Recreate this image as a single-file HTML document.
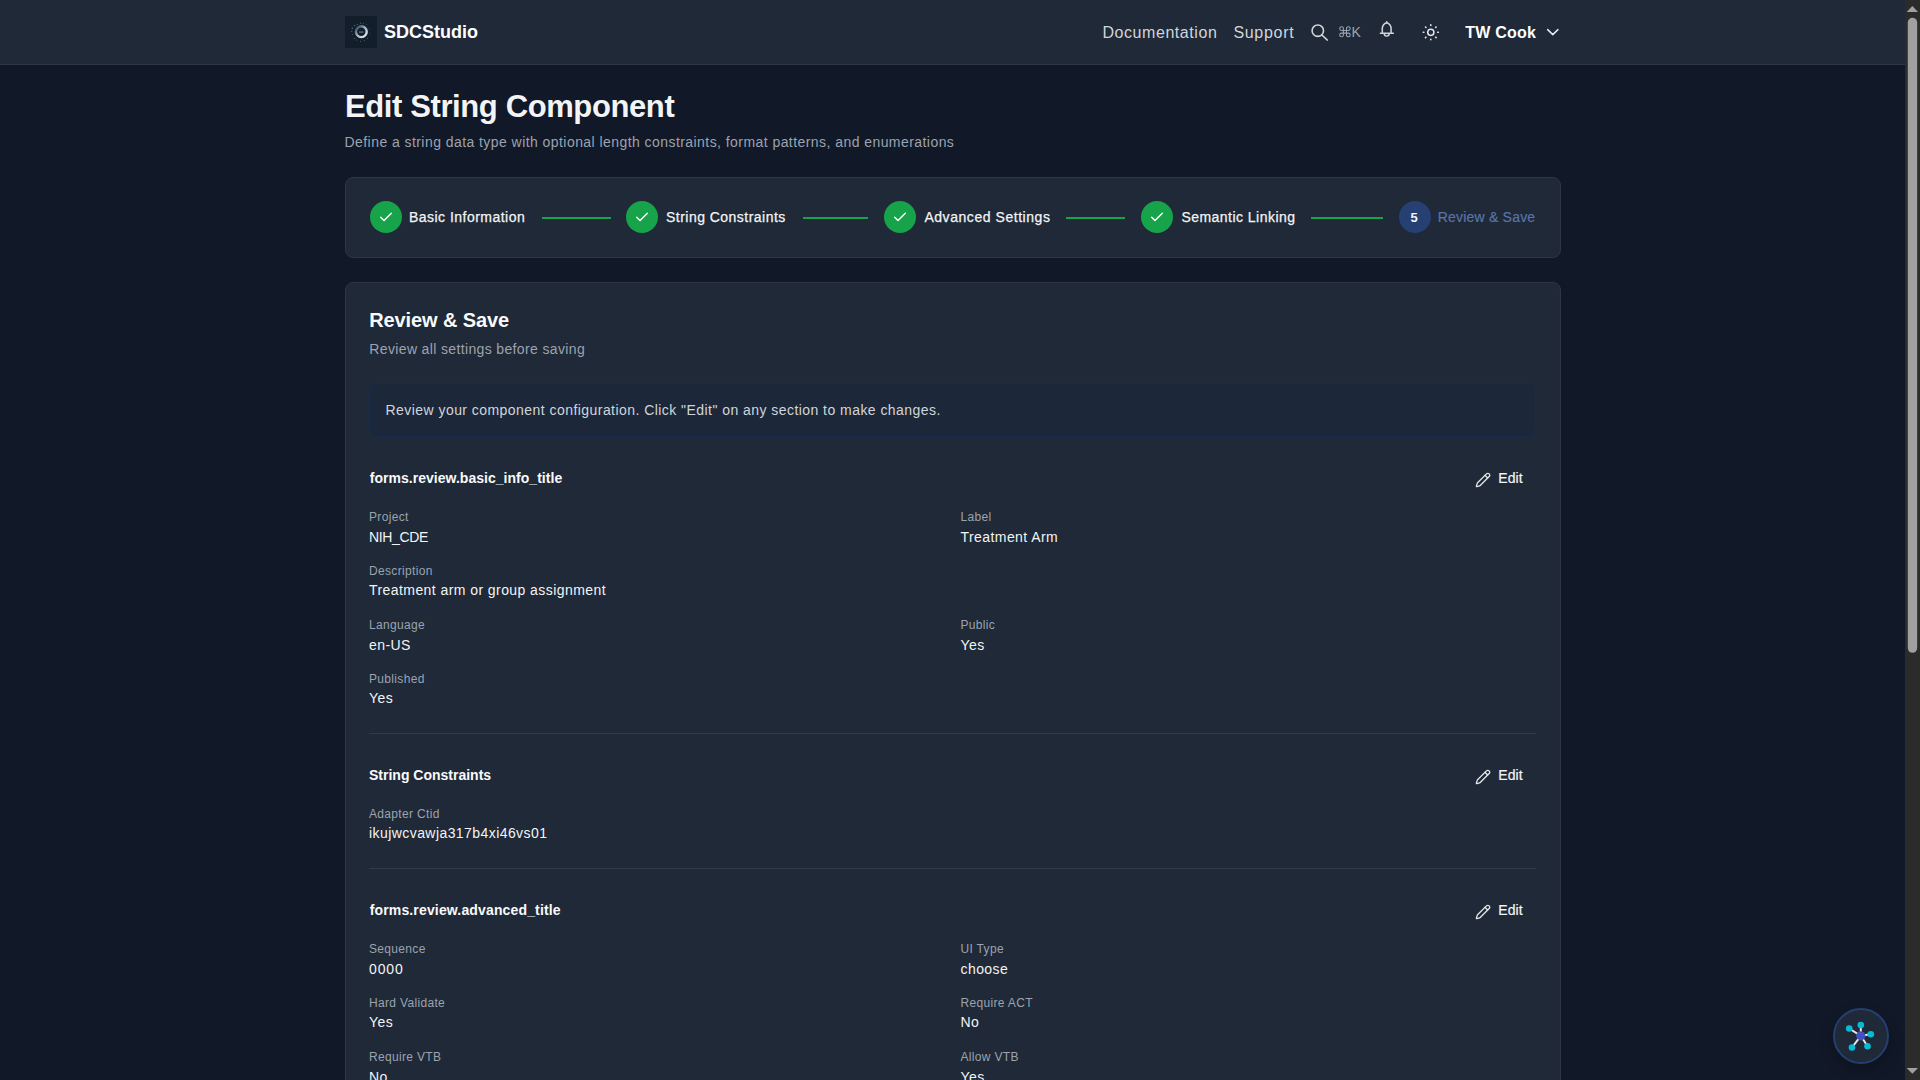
<!DOCTYPE html>
<html>
<head>
<meta charset="utf-8">
<style>
html,body{margin:0;padding:0;width:1920px;height:1080px;overflow:hidden;background:#111827;}
body{font-family:"Liberation Sans",sans-serif;position:relative;}
#page{position:absolute;left:0;top:0;width:1905px;height:1080px;overflow:hidden;background:#111827;}
.t{position:absolute;white-space:nowrap;line-height:1;}
.hdr{position:absolute;left:0;top:0;width:1905px;height:64px;background:#1f2937;border-bottom:1px solid #2d3748;}
.card{position:absolute;background:#1f2937;border:1px solid #2d3546;border-radius:8px;box-sizing:border-box;}
.circ{position:absolute;width:32px;height:32px;border-radius:50%;background:#16a34a;top:201.2px;}
.circ svg{position:absolute;left:0;top:0;}
.line{position:absolute;height:2px;top:216.5px;background:#16a34a;}
.step{font-size:14px;color:#f3f4f6;top:210.35px;letter-spacing:0.47px;-webkit-text-stroke:0.25px #f3f4f6;}
.lbl{font-size:12px;color:#9ca3af;letter-spacing:0.33px;}
.val{font-size:14px;color:#f3f4f6;letter-spacing:0.43px;}
.sec{font-size:14px;font-weight:700;color:#f9fafb;}
.edit{font-size:14px;color:#f3f4f6;letter-spacing:0.1px;-webkit-text-stroke:0.2px #f3f4f6;}
.divider{position:absolute;left:369px;width:1167px;height:1px;background:#323a48;}
#sb{position:absolute;left:1905px;top:0;width:15px;height:1080px;background:#2b2b2b;}
</style>
</head>
<body>
<div id="page">
  <!-- HEADER -->
  <div class="hdr"></div>
  <div style="position:absolute;left:345px;top:16px;width:32px;height:32px;background:#131e2b;">
    <svg width="32" height="32" viewBox="0 0 32 32">
      <defs><linearGradient id="lg" x1="0" y1="0" x2="1" y2="1"><stop offset="0" stop-color="#1f3a58"/><stop offset="0.45" stop-color="#9fb0c4"/><stop offset="1" stop-color="#eef1f5"/></linearGradient></defs>
      <circle cx="16.3" cy="15.7" r="5.4" fill="none" stroke="url(#lg)" stroke-width="2.4"/>
      <rect x="14" y="15.6" width="4.5" height="0.9" fill="#8d99a8"/>
      <g fill="#5f6c7d">
        <circle cx="7.3" cy="12.3" r="0.75"/><circle cx="9.6" cy="9.6" r="0.7"/><circle cx="12.3" cy="8.5" r="0.6"/>
        <circle cx="15.8" cy="7.2" r="0.6"/><circle cx="18.6" cy="7.3" r="0.5"/><circle cx="6.8" cy="15.3" r="0.6"/>
        <circle cx="7.3" cy="18.5" r="0.5"/><circle cx="9.3" cy="22.3" r="0.6"/><circle cx="11.8" cy="24" r="0.5"/>
        <circle cx="15.5" cy="25.2" r="0.5"/><circle cx="19.3" cy="24.8" r="0.5"/><circle cx="22.3" cy="22.3" r="0.5"/>
        <circle cx="25.2" cy="17.3" r="0.45"/><circle cx="24.6" cy="13.2" r="0.45"/><circle cx="21.8" cy="8.7" r="0.45"/>
      </g>
    </svg>
  </div>
  <div class="t" style="left:384px;top:23px;font-size:18px;font-weight:700;color:#ffffff;">SDCStudio</div>
  <div class="t" style="left:1102.4px;top:24.5px;font-size:16px;color:#d1d5db;letter-spacing:0.57px;">Documentation</div>
  <div class="t" style="left:1233.4px;top:24.5px;font-size:16px;color:#d1d5db;letter-spacing:0.7px;">Support</div>
  <!-- search icon -->
  <svg style="position:absolute;left:1300px;top:14px;" width="40" height="34" viewBox="1300 14 40 34">
    <circle cx="1317.8" cy="30.7" r="5.7" fill="none" stroke="#d1d5db" stroke-width="1.6"/>
    <line x1="1321.9" y1="35" x2="1327.2" y2="40" stroke="#d1d5db" stroke-width="1.7" stroke-linecap="round"/>
  </svg>
  <!-- cmd K -->
  <svg style="position:absolute;left:1336px;top:22px;" width="16" height="18" viewBox="1336 22 16 18"><path d="M1343.4 28.549999999999997 V34.95 M1346.5 28.549999999999997 V34.95 M1341.5500000000002 30.4 H1348.35 M1341.5500000000002 33.1 H1348.35 M1343.4 28.549999999999997 A1.85 1.85 0 1 0 1341.5500000000002 30.4 M1346.5 28.549999999999997 A1.85 1.85 0 1 1 1348.35 30.4 M1343.4 34.95 A1.85 1.85 0 1 1 1341.5500000000002 33.1 M1346.5 34.95 A1.85 1.85 0 1 0 1348.35 33.1" fill="none" stroke="#9ca3af" stroke-width="1.05"/></svg>
  <div class="t" style="left:1351.6px;top:25px;font-size:14px;color:#9ca3af;">K</div>
  <!-- bell -->
  <svg style="position:absolute;left:1376px;top:18px;" width="22" height="22" viewBox="1376 18 22 22">
    <path d="M1380.4 33.25 H1393.3 M1382.3 33.25 V29 C1382.3 25.9 1384.1 23.5 1386.7 22.7 C1389.3 23.5 1391.1 25.9 1391.1 29 V33.25" fill="none" stroke="#d1d5db" stroke-width="1.5" stroke-linejoin="round" stroke-linecap="round"/>
    <path d="M1386.7 21.7 V22.8" fill="none" stroke="#d1d5db" stroke-width="1.6" stroke-linecap="round"/>
    <path d="M1384.2 33.6 A2.5 2.5 0 0 0 1389.2 33.6" fill="none" stroke="#d1d5db" stroke-width="1.45"/>
  </svg>
  <!-- sun -->
  <svg style="position:absolute;left:1420px;top:21px;" width="22" height="22" viewBox="1420 21 22 22">
    <circle cx="1430.8" cy="32.3" r="3.1" fill="none" stroke="#e5e7eb" stroke-width="1.5"/>
    <g stroke="#e5e7eb" stroke-width="1.6" stroke-linecap="round">
      <line x1="1430.8" y1="24.8" x2="1430.8" y2="25.4"/>
      <line x1="1430.8" y1="39.2" x2="1430.8" y2="39.8"/>
      <line x1="1423.3" y1="32.3" x2="1423.9" y2="32.3"/>
      <line x1="1437.7" y1="32.3" x2="1438.3" y2="32.3"/>
      <line x1="1425.5" y1="27" x2="1425.9" y2="27.4"/>
      <line x1="1435.7" y1="37.2" x2="1436.1" y2="37.6"/>
      <line x1="1436.1" y1="27" x2="1435.7" y2="27.4"/>
      <line x1="1425.9" y1="37.2" x2="1425.5" y2="37.6"/>
    </g>
  </svg>
  <div class="t" style="left:1465.3px;top:25.1px;font-size:16px;font-weight:700;color:#ffffff;letter-spacing:0.2px;">TW Cook</div>
  <svg style="position:absolute;left:1544px;top:26px;" width="18" height="12" viewBox="1544 26 18 12">
    <path d="M1547.7 29.6 L1552.8 34.6 L1557.9 29.6" fill="none" stroke="#e5e7eb" stroke-width="1.5" stroke-linecap="round" stroke-linejoin="round"/>
  </svg>

  <!-- TITLE -->
  <div class="t" style="left:345px;top:91.1px;font-size:31px;font-weight:700;color:#f3f4f6;letter-spacing:-0.39px;">Edit String Component</div>
  <div class="t" style="left:344.5px;top:134.85px;font-size:14px;color:#9ca3af;letter-spacing:0.44px;">Define a string data type with optional length constraints, format patterns, and enumerations</div>

  <!-- STEPPER -->
  <div class="card" style="left:345px;top:177px;width:1216px;height:81px;"></div>
  <div class="circ" style="left:369.6px;"><svg width="32" height="32" viewBox="0 0 32 32"><path d="M10.67 16.2 L14 19.53 L21.33 12.2" fill="none" stroke="#fff" stroke-width="1.45" stroke-linecap="round" stroke-linejoin="round"/></svg></div>
  <div class="t step" style="left:409px;">Basic Information</div>
  <div class="line" style="left:542px;width:68.5px;"></div>
  <div class="circ" style="left:626.3px;"><svg width="32" height="32" viewBox="0 0 32 32"><path d="M10.67 16.2 L14 19.53 L21.33 12.2" fill="none" stroke="#fff" stroke-width="1.45" stroke-linecap="round" stroke-linejoin="round"/></svg></div>
  <div class="t step" style="left:666px;">String Constraints</div>
  <div class="line" style="left:803px;width:65px;"></div>
  <div class="circ" style="left:884px;"><svg width="32" height="32" viewBox="0 0 32 32"><path d="M10.67 16.2 L14 19.53 L21.33 12.2" fill="none" stroke="#fff" stroke-width="1.45" stroke-linecap="round" stroke-linejoin="round"/></svg></div>
  <div class="t step" style="left:924.4px;letter-spacing:0.55px;">Advanced Settings</div>
  <div class="line" style="left:1066px;width:59px;"></div>
  <div class="circ" style="left:1140.7px;"><svg width="32" height="32" viewBox="0 0 32 32"><path d="M10.67 16.2 L14 19.53 L21.33 12.2" fill="none" stroke="#fff" stroke-width="1.45" stroke-linecap="round" stroke-linejoin="round"/></svg></div>
  <div class="t step" style="left:1181.4px;">Semantic Linking</div>
  <div class="line" style="left:1311px;width:72.2px;"></div>
  <div class="circ" style="left:1398.5px;background:#274073;"></div>
  <div class="t" style="left:1410.5px;top:211.3px;font-size:13px;font-weight:700;color:#f3f4f6;">5</div>
  <div class="t step" style="left:1437.8px;color:#5874aa;-webkit-text-stroke:0.2px #5874aa;letter-spacing:0.2px;">Review &amp; Save</div>

  <!-- REVIEW CARD -->
  <div class="card" style="left:345px;top:282px;width:1216px;height:900px;"></div>
  <div class="t" style="left:369.2px;top:310px;font-size:20px;font-weight:700;color:#f9fafb;letter-spacing:-0.1px;">Review &amp; Save</div>
  <div class="t" style="left:369.3px;top:341.9px;font-size:14px;color:#9ca3af;letter-spacing:0.36px;">Review all settings before saving</div>

  <div style="position:absolute;left:369.5px;top:383px;width:1166px;height:53.5px;box-sizing:border-box;border:1px solid #172b4e;border-radius:8px;background:#1c2839;"></div>
  <div class="t" style="left:385.5px;top:403.15px;font-size:14px;color:#d1d5db;letter-spacing:0.45px;">Review your component configuration. Click "Edit" on any section to make changes.</div>

  <!-- Section 1 -->
  <div class="t sec" style="left:369.7px;top:471.05px;letter-spacing:0.03px;">forms.review.basic_info_title</div>
  <svg style="position:absolute;left:1474.8px;top:471.5px;" width="16" height="16" viewBox="0 0 24 24"><path d="M21.174 6.812a1 1 0 0 0-3.986-3.987L3.842 16.174a2 2 0 0 0-.5.83l-1.321 4.352a.5.5 0 0 0 .623.622l4.353-1.32a2 2 0 0 0 .83-.497z" fill="none" stroke="#e5e7eb" stroke-width="1.95" stroke-linecap="round" stroke-linejoin="round"/><path d="m15 5 4 4" fill="none" stroke="#e5e7eb" stroke-width="1.95" stroke-linecap="round"/></svg>
  <div class="t edit" style="left:1498.3px;top:471.15px;">Edit</div>

  <div class="t lbl" style="left:369px;top:511px;">Project</div>
  <div class="t val" style="left:369px;top:530.15px;letter-spacing:-0.35px;">NIH_CDE</div>
  <div class="t lbl" style="left:960.5px;top:511px;">Label</div>
  <div class="t val" style="left:960.5px;top:530.15px;">Treatment Arm</div>

  <div class="t lbl" style="left:369px;top:564.75px;">Description</div>
  <div class="t val" style="left:369px;top:582.95px;">Treatment arm or group assignment</div>

  <div class="t lbl" style="left:369px;top:618.85px;">Language</div>
  <div class="t val" style="left:369px;top:638.15px;">en-US</div>
  <div class="t lbl" style="left:960.5px;top:618.85px;">Public</div>
  <div class="t val" style="left:960.5px;top:638.15px;">Yes</div>

  <div class="t lbl" style="left:369px;top:672.55px;">Published</div>
  <div class="t val" style="left:369px;top:690.75px;">Yes</div>

  <div class="divider" style="top:733px;"></div>

  <!-- Section 2 -->
  <div class="t sec" style="left:369px;top:767.95px;">String Constraints</div>
  <svg style="position:absolute;left:1474.8px;top:768.5px;" width="16" height="16" viewBox="0 0 24 24"><path d="M21.174 6.812a1 1 0 0 0-3.986-3.987L3.842 16.174a2 2 0 0 0-.5.83l-1.321 4.352a.5.5 0 0 0 .623.622l4.353-1.32a2 2 0 0 0 .83-.497z" fill="none" stroke="#e5e7eb" stroke-width="1.95" stroke-linecap="round" stroke-linejoin="round"/><path d="m15 5 4 4" fill="none" stroke="#e5e7eb" stroke-width="1.95" stroke-linecap="round"/></svg>
  <div class="t edit" style="left:1498.3px;top:768.15px;">Edit</div>
  <div class="t lbl" style="left:369px;top:807.95px;">Adapter Ctid</div>
  <div class="t val" style="left:369px;top:826.15px;">ikujwcvawja317b4xi46vs01</div>

  <div class="divider" style="top:868px;"></div>

  <!-- Section 3 -->
  <div class="t sec" style="left:369.7px;top:903.15px;letter-spacing:0.15px;">forms.review.advanced_title</div>
  <svg style="position:absolute;left:1474.8px;top:903.5px;" width="16" height="16" viewBox="0 0 24 24"><path d="M21.174 6.812a1 1 0 0 0-3.986-3.987L3.842 16.174a2 2 0 0 0-.5.83l-1.321 4.352a.5.5 0 0 0 .623.622l4.353-1.32a2 2 0 0 0 .83-.497z" fill="none" stroke="#e5e7eb" stroke-width="1.95" stroke-linecap="round" stroke-linejoin="round"/><path d="m15 5 4 4" fill="none" stroke="#e5e7eb" stroke-width="1.95" stroke-linecap="round"/></svg>
  <div class="t edit" style="left:1498.3px;top:903.15px;">Edit</div>

  <div class="t lbl" style="left:369px;top:942.75px;">Sequence</div>
  <div class="t val" style="left:369px;top:961.75px;letter-spacing:0.85px;">0000</div>
  <div class="t lbl" style="left:960.5px;top:942.75px;">UI Type</div>
  <div class="t val" style="left:960.5px;top:961.75px;">choose</div>

  <div class="t lbl" style="left:369px;top:996.55px;">Hard Validate</div>
  <div class="t val" style="left:369px;top:1014.85px;">Yes</div>
  <div class="t lbl" style="left:960.5px;top:996.55px;">Require ACT</div>
  <div class="t val" style="left:960.5px;top:1014.85px;">No</div>

  <div class="t lbl" style="left:369px;top:1050.65px;">Require VTB</div>
  <div class="t val" style="left:369px;top:1069.8px;">No</div>
  <div class="t lbl" style="left:960.5px;top:1050.65px;">Allow VTB</div>
  <div class="t val" style="left:960.5px;top:1069.8px;">Yes</div>

  <!-- FAB -->
  <div style="position:absolute;left:1832.8px;top:1007.8px;width:56px;height:56px;box-sizing:border-box;border-radius:50%;background:#1f2937;border:2px solid #243f70;box-shadow:0 6px 14px rgba(0,0,0,0.25);"></div>
  <svg style="position:absolute;left:1840px;top:1015px;" width="42" height="42" viewBox="1840 1015 42 42">
    <g stroke="#e5e7eb" stroke-width="2">
      <line x1="1860.8" y1="1035.8" x2="1860.8" y2="1025"/>
      <line x1="1860.8" y1="1035.8" x2="1849.2" y2="1028.5"/>
      <line x1="1860.8" y1="1035.8" x2="1870.8" y2="1034.2"/>
      <line x1="1860.8" y1="1035.8" x2="1852" y2="1047.5"/>
      <line x1="1860.8" y1="1035.8" x2="1867.5" y2="1046.2"/>
    </g>
    <g fill="#06bcd4">
      <circle cx="1860.8" cy="1025" r="3.3"/>
      <circle cx="1849.2" cy="1028.5" r="3.3"/>
      <circle cx="1870.8" cy="1034.2" r="3.3"/>
      <circle cx="1852" cy="1047.5" r="3.3"/>
      <circle cx="1867.5" cy="1046.2" r="3.3"/>
    </g>
    <circle cx="1860.8" cy="1035.8" r="4.6" fill="#4450c0"/>
  </svg>
</div>
<!-- SCROLLBAR -->
<div id="sb">
  <svg width="15" height="1080" viewBox="1905 0 15 1080" style="position:absolute;left:0;top:0;">
    <polygon points="1906.7,12 1918,12 1912.35,6" fill="#a0a0a0"/>
    <rect x="1907.8" y="17.8" width="9.4" height="635" rx="4.7" fill="#a0a0a0"/>
    <polygon points="1906.7,1068 1918,1068 1912.35,1073.8" fill="#a0a0a0"/>
  </svg>
</div>
</body>
</html>
